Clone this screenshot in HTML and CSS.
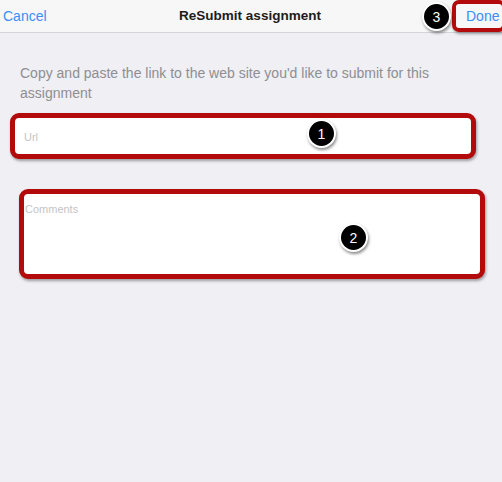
FILE: index.html
```html
<!doctype html>
<html lang="en">

<head>
    <meta charset="UTF-8" />
    <meta name="viewport" content="width=device-width, initial-scale=1.0" />
    <title>ReSubmit assignment</title>
    <link rel="stylesheet" href="styles.css">
</head>

<body>
    <!-- barra de navegacion -->
    <div class="nav-bar">
        <span class="nav-link cancel">Cancel</span>
        <span class="nav-title">ReSubmit assignment</span>
        <div class="nav-right">
            <span class="badge badge-3">3</span>
            <span class="done-box"><span class="nav-link">Done</span></span>
        </div>
    </div>

    <!-- formulario -->
    <div class="submit-form">
        <p class="intro">Copy and paste the link to the web site you'd like to submit for this assignment</p>

        <div class="field url-field">
            <span class="placeholder">Url</span>
            <span class="badge badge-1">1</span>
        </div>

        <div class="field comments-field">
            <span class="placeholder">Comments</span>
            <span class="badge badge-2">2</span>
        </div>
    </div>
</body>

</html>
```

FILE: styles.css
```css
*,
*::before,
*::after {
    box-sizing: border-box;
}

body {
    margin: 0;
    font-family: 'Liberation Sans', Arial, sans-serif;
    background: #efeff4;
    height: 100vh;
}

.nav-bar {
    display: grid;
    grid-template-columns: 1fr auto 1fr;
    align-items: center;
    height: 33px;
    background: #f7f7f8;
    border-bottom: 1px solid #d6d6da;
}

.nav-link {
    color: #3a8ef6;
    font-size: 14px;
}

.cancel {
    padding-left: 3px;
    padding-bottom: 1px;
}

.nav-title {
    font-size: 13.5px;
    font-weight: bold;
    color: #1c1c1c;
    padding-bottom: 1px;
    padding-right: 2px;
}

.nav-right {
    display: flex;
    justify-content: flex-end;
    align-items: center;
    align-self: stretch;
    position: relative;
}

.done-box {
    display: flex;
    align-items: center;
    height: 32px;
    width: 54px;
    margin-right: -4px;
    margin-top: -1px;
    padding-left: 10px;
    border: 4px solid #b30b0b;
    border-radius: 7px;
    box-shadow: 1px 2px 3px rgba(0, 0, 0, 0.35);
}

.submit-form {
    padding: 30px 0 0 0;
}

.intro {
    margin: 0 0 0 20px;
    width: 440px;
    font-size: 14px;
    line-height: 20px;
    color: #8e8e93;
}

.field {
    position: relative;
    width: 466px;
    background: #fff;
    border: 5px solid #b30b0b;
    border-radius: 9px;
    box-shadow: 1px 2px 3px rgba(0, 0, 0, 0.35);
}

.url-field {
    margin: 10px 0 0 10px;
    height: 46px;
    padding: 9px 0 0 9px;
}

.comments-field {
    margin: 30px 0 0 19px;
    height: 90px;
    padding: 5px 0 0 1px;
}

.placeholder {
    font-size: 11px;
    color: #c4c4c8;
}

/* marcadores numerados */
.badge {
    position: absolute;
    display: flex;
    align-items: center;
    justify-content: center;
    width: 29px;
    height: 29px;
    border-radius: 50%;
    background: #000;
    border: 2px solid #fff;
    color: #fff;
    font-size: 14px;
    box-shadow: 1px 2px 3px rgba(0, 0, 0, 0.45);
}

.badge-1 {
    left: 292px;
    top: 1px;
}

.badge-2 {
    left: 315px;
    top: 29px;
}

.badge-3 {
    right: 51px;
    top: 2px;
}
```
